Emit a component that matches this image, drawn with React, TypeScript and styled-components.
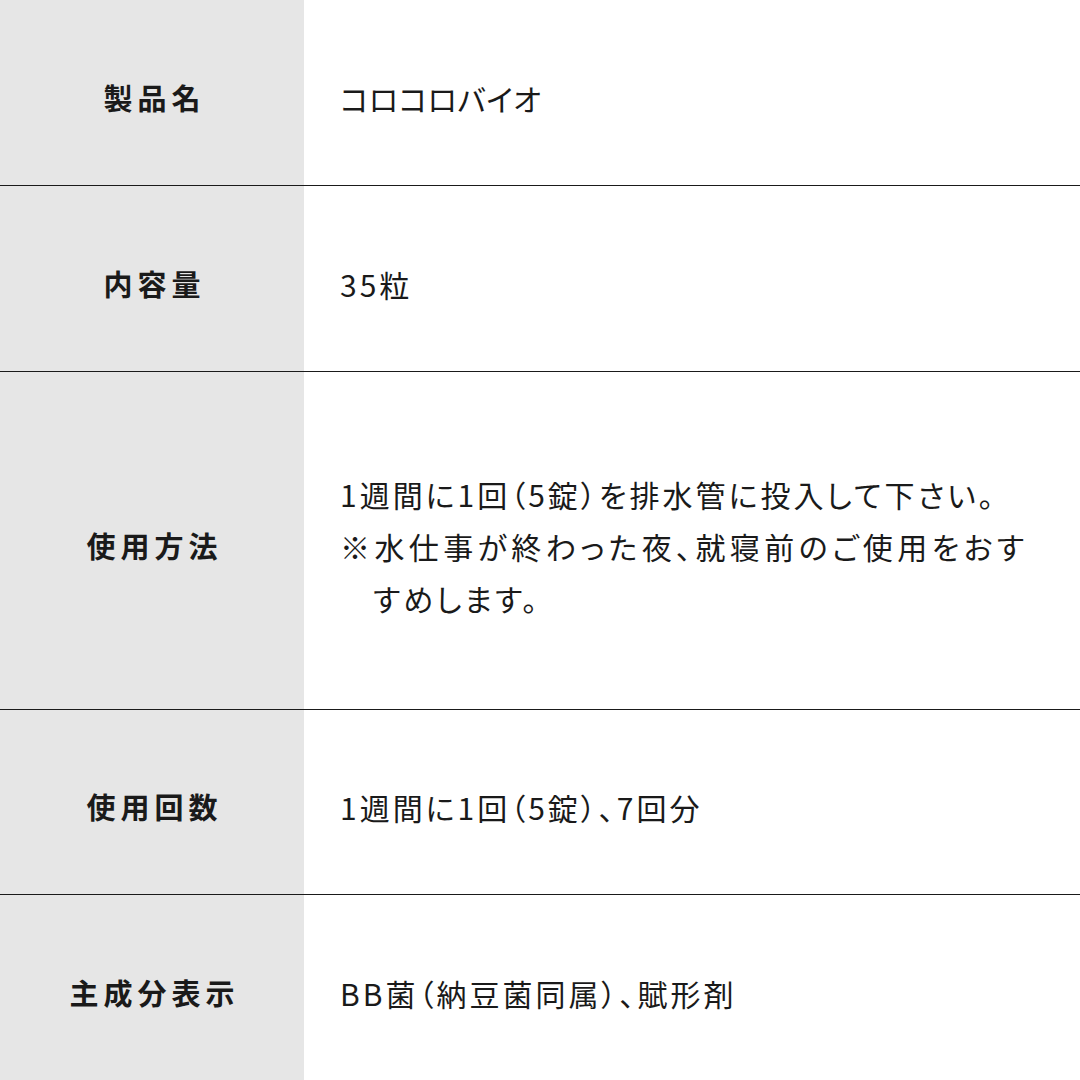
import styled, { createGlobalStyle } from "styled-components";

const GlobalStyle = createGlobalStyle`
  html, body {
    margin: 0;
    padding: 0;
    background: #ffffff;
  }
  body {
    font-family: "Noto Sans CJK JP", "Noto Sans", sans-serif;
    color: #1a1a1a;
  }
  *, *::before, *::after {
    box-sizing: border-box;
  }
`;

const Table = styled.div`
  width: 1080px;
  height: 1080px;
  display: flex;
  flex-direction: column;
  overflow: hidden;
`;

const Row = styled.div<{ $h: number; $last?: boolean }>`
  display: grid;
  grid-template-columns: 304px 1fr;
  height: ${(p) => p.$h}px;
  border-bottom: ${(p) => (p.$last ? "none" : "1px solid #1a1a1a")};
  flex-shrink: 0;
`;

const Label = styled.div`
  background: #e6e6e6;
  display: flex;
  align-items: center;
  justify-content: center;
  font-size: 29px;
  font-weight: 700;
  letter-spacing: 5px;
  padding-top: 8px;
  padding-left: 5px;
`;

const Value = styled.div<{ $tight?: boolean }>`
  display: flex;
  flex-direction: column;
  justify-content: center;
  padding: 10px 53px 0 36px;
  font-size: 30px;
  font-weight: 400;
  letter-spacing: ${(p) => (p.$tight ? "0.5px" : "3px")};
  line-height: 52px;
  font-feature-settings: "palt";
`;

const Note = styled.div`
  padding-left: 33px;
  text-indent: -33px;
  text-align: justify;
`;

type RowData = {
  label: string;
  h: number;
  value: string;
  note?: string;
  tight?: boolean;
  last?: boolean;
};

const rows: RowData[] = [
  { label: "製品名", h: 186, value: "コロコロバイオ", tight: true },
  { label: "内容量", h: 186, value: "35粒" },
  {
    label: "使用方法",
    h: 338,
    value: "1週間に1回（5錠）を排水管に投入して下さい。",
    note: "※水仕事が終わった夜、就寝前のご使用をおすすめします。",
  },
  { label: "使用回数", h: 185, value: "1週間に1回（5錠）、7回分" },
  { label: "主成分表示", h: 185, value: "BB菌（納豆菌同属）、賦形剤", last: true },
];

export default function App() {
  return (
    <>
      <GlobalStyle />
      <Table>
        {rows.map((r) => (
          <Row key={r.label} $h={r.h} $last={r.last}>
            <Label>{r.label}</Label>
            <Value $tight={r.tight}>
              <div>{r.value}</div>
              {r.note && <Note>{r.note}</Note>}
            </Value>
          </Row>
        ))}
      </Table>
    </>
  );
}
